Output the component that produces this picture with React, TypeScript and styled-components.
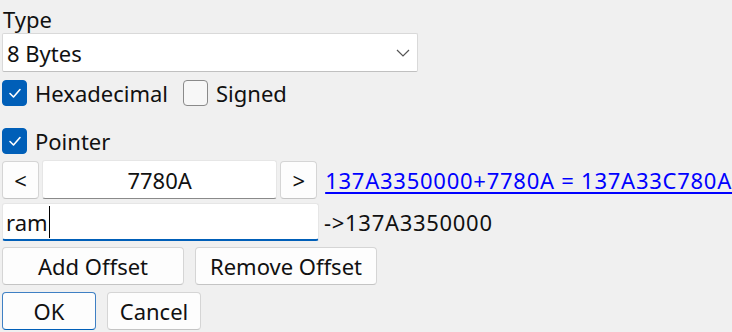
import React from 'react';
import styled, { createGlobalStyle } from 'styled-components';

const GlobalStyle = createGlobalStyle`
    html, body {
        margin: 0;
        padding: 0;
        background: #f0f0f0;
    }
    body {
        font-family: "Noto Sans", "Open Sans", sans-serif;
        font-size: 22px;
        color: #111;
    }
`;

const Dialog = styled.div`
    width: 732px;
    height: 332px;
    display: flex;
    flex-direction: column;
    box-sizing: border-box;
    padding: 6px 0 0 2px;
`;

const Label = styled.div`
    height: 27px;
    line-height: 27px;
    padding-left: 1px;
`;

const Combo = styled.div`
    width: 416px;
    height: 39px;
    box-sizing: border-box;
    background: #fff;
    border: 1px solid #d9d9d9;
    border-bottom-color: #c0c0c0;
    border-radius: 2px;
    display: flex;
    align-items: center;
    justify-content: space-between;
    padding: 0 7px 0 4px;
`;

const Row = styled.div<{ $top: number; $gap?: number }>`
    display: flex;
    align-items: center;
    margin-top: ${({ $top }) => $top}px;
    gap: ${({ $gap }) => $gap ?? 0}px;
`;

const CheckLabel = styled.label`
    display: flex;
    align-items: center;
    gap: 8px;
    height: 26px;
    margin-right: 15px;
`;

const Box = styled.span<{ $checked?: boolean }>`
    width: 25px;
    height: 26px;
    box-sizing: border-box;
    border-radius: 4px;
    display: flex;
    align-items: center;
    justify-content: center;
    background: ${({ $checked }) => ($checked ? '#005fb8' : '#f7f7f7')};
    border: 1px solid ${({ $checked }) => ($checked ? '#005fb8' : '#8a8a8a')};
`;

const Button = styled.button<{ $w: number; $primary?: boolean }>`
    width: ${({ $w }) => $w}px;
    height: 38px;
    box-sizing: border-box;
    background: #fdfdfd;
    border: 1px solid ${({ $primary }) => ($primary ? '#3f80c4' : '#d5d5d5')};
    border-bottom-color: ${({ $primary }) => ($primary ? '#005fb8' : '#c4c4c4')};
    border-radius: 4px;
    font: inherit;
    color: #111;
    padding: 0;
`;

const TextBox = styled.div<{ $w: number; $h?: number; $focused?: boolean; $center?: boolean }>`
    width: ${({ $w }) => $w}px;
    height: ${({ $h }) => $h ?? 39}px;
    box-sizing: border-box;
    background: #fff;
    border: 1px solid #e6e6e6;
    border-bottom: ${({ $focused }) => ($focused ? '2px solid #005fb8' : '1px solid #8a8a8a')};
    border-radius: 3px;
    display: flex;
    align-items: center;
    justify-content: ${({ $center }) => ($center ? 'center' : 'flex-start')};
    padding: 0 3px;
`;

const Caret = styled.span`
    display: inline-block;
    width: 1px;
    height: 32px;
    background: #000;
    margin-left: 1px;
`;

const Link = styled.a`
    color: #0000ff;
    text-decoration: underline;
    text-underline-offset: 3px;
    margin-left: 5px;
    white-space: nowrap;
    letter-spacing: 0.75px;
`;

const Plain = styled.span`
    margin-left: 5px;
    white-space: nowrap;
    letter-spacing: 0.7px;
`;

const Check = () => (
    <svg width="14" height="12" viewBox="0 0 14 12">
        <path d="M2 6.5 L5.5 10 L12 2.5" fill="none" stroke="#fff" strokeWidth="1.6" strokeLinecap="round" strokeLinejoin="round" />
    </svg>
);

const Chevron = () => (
    <svg width="14" height="8" viewBox="0 0 14 8">
        <path d="M1 1 L7 7 L13 1" fill="none" stroke="#555" strokeWidth="1.2" />
    </svg>
);

const App: React.FC = () => {
    return (
        <>
            <GlobalStyle />
            <Dialog>
                <Label>Type</Label>
                <Combo>
                    <span>8 Bytes</span>
                    <Chevron />
                </Combo>
                <Row $top={8}>
                    <CheckLabel><Box $checked><Check /></Box>Hexadecimal</CheckLabel>
                    <CheckLabel><Box />Signed</CheckLabel>
                </Row>
                <Row $top={22}>
                    <CheckLabel><Box $checked><Check /></Box>Pointer</CheckLabel>
                </Row>
                <Row $top={6} $gap={3}>
                    <Button $w={37}>&lt;</Button>
                    <TextBox $w={236} $center>7780A</TextBox>
                    <Button $w={37}>&gt;</Button>
                    <Link>137A3350000+7780A = 137A33C780A</Link>
                </Row>
                <Row $top={4}>
                    <TextBox $w={317} $h={38} $focused>ram<Caret /></TextBox>
                    <Plain>-&gt;137A3350000</Plain>
                </Row>
                <Row $top={6} $gap={11}>
                    <Button $w={182}>Add Offset</Button>
                    <Button $w={182}>Remove Offset</Button>
                </Row>
                <Row $top={7} $gap={11}>
                    <Button $w={94} $primary>OK</Button>
                    <Button $w={94}>Cancel</Button>
                </Row>
            </Dialog>
        </>
    );
};

export default App;
